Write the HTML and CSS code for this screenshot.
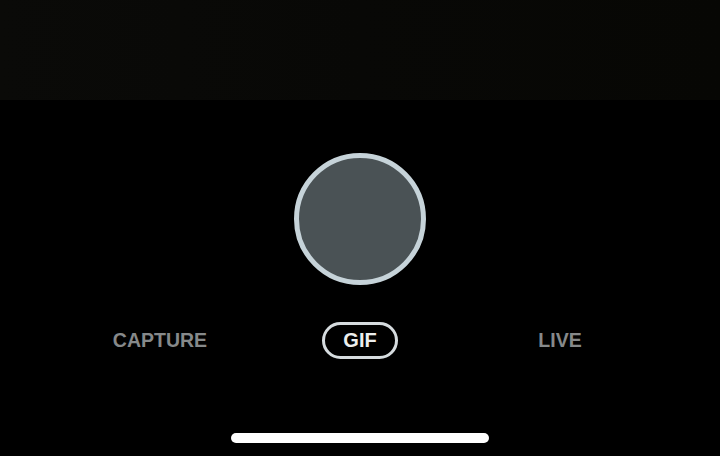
FILE: index.html
```html
<!DOCTYPE html>
<html lang="en">

<head>
  <meta charset="UTF-8">
  <meta name="viewport" content="width=device-width, initial-scale=1.0">
  <title>Camera</title>
  <link rel="stylesheet" href="styles.css">
</head>

<body>
  <div class="camera">
    <div class="preview"></div>
    <div class="controls">
      <button class="shutter"></button>
      <div class="modes">
        <span class="mode">CAPTURE</span>
        <span class="mode"><span class="mode-active">GIF</span></span>
        <span class="mode">LIVE</span>
      </div>
    </div>
    <div class="home-indicator"></div>
  </div>
</body>

</html>
```

FILE: styles.css
```css
body {
  margin: 0;
  background-color: #000;
  font-family: "Liberation Sans", Arial, sans-serif;
}

.camera {
  width: 720px;
  height: 456px;
  display: flex;
  flex-direction: column;
  align-items: center;
  overflow: hidden;
}

.preview {
  width: 100%;
  height: 100px;
  background: linear-gradient(90deg, #0a0a08 0%, #080806 50%, #070704 100%);
}

.controls {
  display: flex;
  flex-direction: column;
  align-items: center;
  margin-top: 53px;
}

.shutter {
  width: 132px;
  height: 132px;
  border-radius: 50%;
  border: 5px solid #c6d3d9;
  background-color: #4a5255;
  padding: 0;
}

.modes {
  display: grid;
  grid-template-columns: repeat(3, 200px);
  margin-top: 37px;
  height: 37px;
}

.mode {
  display: flex;
  justify-content: center;
  align-items: center;
  font-size: 19.5px;
  font-weight: bold;
  color: #86898a;
}

.mode-active {
  display: flex;
  justify-content: center;
  align-items: center;
  box-sizing: border-box;
  width: 76px;
  height: 37px;
  border: 3px solid #d6dcdf;
  border-radius: 19px;
  color: #eceeee;
  font-size: 20px;
}

.home-indicator {
  width: 258px;
  height: 10px;
  border-radius: 5px;
  background-color: #fff;
  margin-top: 74px;
}
```
